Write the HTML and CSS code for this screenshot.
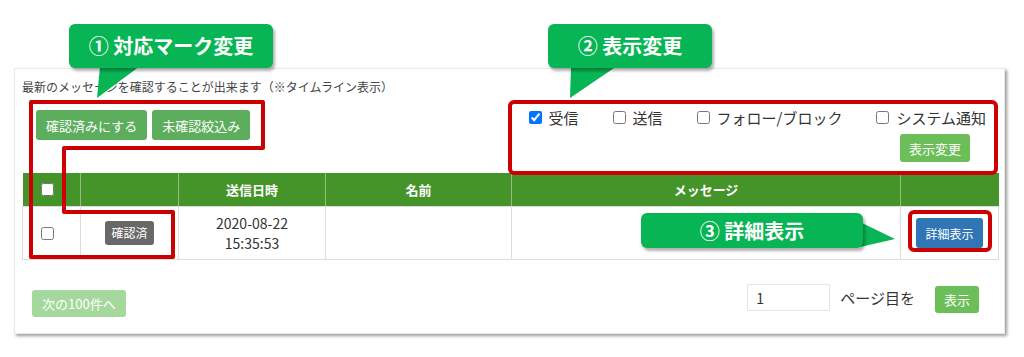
FILE: index.html
```html
<!DOCTYPE html>
<html lang="ja">
<head>
    <meta charset="UTF-8" />
    <title>メッセージ一覧</title>
    <link rel="stylesheet" href="styles.css">
</head>
<body>
    <div class="panel">
        <p class="caption">最新のメッセージを確認することが出来ます（※タイムライン表示）</p>
        <div class="toolbar">
            <div class="actions">
                <button class="btn btn-green">確認済みにする</button>
                <button class="btn btn-green">未確認絞込み</button>
            </div>
            <div class="filters">
                <div class="filter-row">
                    <label><input type="checkbox" checked>受信</label>
                    <label><input type="checkbox">送信</label>
                    <label><input type="checkbox">フォロー/ブロック</label>
                    <label><input type="checkbox">システム通知</label>
                </div>
                <button class="btn btn-light btn-apply">表示変更</button>
            </div>
        </div>
        <table class="messages">
            <colgroup>
                <col style="width: 58px">
                <col style="width: 98px">
                <col style="width: 147px">
                <col style="width: 186px">
                <col style="width: 389px">
                <col style="width: 98px">
            </colgroup>
            <thead>
                <tr>
                    <th class="check-cell"><input type="checkbox"></th>
                    <th></th>
                    <th>送信日時</th>
                    <th>名前</th>
                    <th>メッセージ</th>
                    <th></th>
                </tr>
            </thead>
            <tbody>
                <tr>
                    <td class="check-cell"><input type="checkbox"></td>
                    <td><span class="badge">確認済</span></td>
                    <td class="date">2020-08-22<br>15:35:53</td>
                    <td></td>
                    <td></td>
                    <td><button class="btn btn-blue">詳細表示</button></td>
                </tr>
            </tbody>
        </table>
        <div class="pager">
            <button class="btn btn-pale btn-next">次の100件へ</button>
            <div class="page-jump">
                <input class="page-input" type="text" value="1">
                <span class="page-label">ページ目を</span>
                <button class="btn btn-light btn-show">表示</button>
            </div>
        </div>
    </div>

    <!-- annotation overlay -->
    <svg class="marks" width="1024" height="357" viewBox="0 0 1024 357">
        <polygon class="tail" points="100,66 140,66 97,98" />
        <polygon class="tail" points="571,66 617,66 570,98" />
        <polygon class="tail" points="860,222 895,239 860,247" />
        <path class="frame" d="M31,102 H263 V148 H64 V212 H173 V257 H31 Z" />
        <rect class="frame" x="510" y="102" width="486" height="71" rx="4" />
        <rect class="frame" x="910" y="212" width="80" height="38" rx="4" />
    </svg>
    <div class="callout callout-1">① 対応マーク変更</div>
    <div class="callout callout-2">② 表示変更</div>
    <div class="callout callout-3">③ 詳細表示</div>
</body>
</html>
```

FILE: styles.css
```css
body {
    margin: 0;
    background-color: rgb(255, 255, 255);
    color: rgb(51, 51, 51);
    font-family: "Noto Sans CJK JP", "Noto Sans", sans-serif;
    position: relative;
    width: 1024px;
    height: 357px;
    overflow: hidden;
}
.panel {
    box-sizing: border-box;
    width: 991px;
    height: 266px;
    margin: 68px 0 0 14px;
    padding: 0 6px 0 7px;
    border: 1px solid rgb(234, 234, 234);
    box-shadow: 2px 2px 3px rgba(0, 0, 0, 0.4);
    background: rgb(255, 255, 255);
}
.caption {
    margin: 0;
    padding-top: 9px;
    font-size: 12px;
    line-height: 18px;
    color: rgb(68, 68, 68);
}
.toolbar {
    display: flex;
    justify-content: space-between;
    height: 77px;
}
.actions {
    display: flex;
    gap: 5px;
    padding: 14px 0 0 14px;
    align-items: flex-start;
}
.btn {
    border: none;
    border-radius: 3px;
    color: rgb(255, 255, 255);
    font-family: inherit;
    font-size: 13px;
    cursor: pointer;
    padding: 0 10px;
}
.btn-green {
    background-color: rgb(92, 174, 92);
    height: 30px;
}
.btn-light {
    background-color: rgb(108, 190, 88);
    height: 28px;
}
.btn-blue {
    background-color: rgb(48, 118, 180);
    height: 30px;
    padding: 0 9px;
    font-size: 12px;
}
.btn-pale {
    background-color: rgb(165, 216, 156);
    height: 27px;
}
.filters {
    display: flex;
    flex-direction: column;
    align-items: flex-end;
    padding-top: 12px;
}
.filter-row {
    display: flex;
    gap: 34px;
    margin-right: 12px;
    height: 18px;
    align-items: center;
    font-size: 15px;
}
.filter-row label {
    display: flex;
    align-items: center;
}
input[type="checkbox"] {
    width: 13px;
    height: 13px;
    margin: 0 7px 0 0;
}
.btn-apply {
    margin: 8px 28px 0 0;
    padding: 0 9px;
}
.messages {
    width: 976px;
    border-collapse: collapse;
    table-layout: fixed;
    font-size: 13px;
}
.messages th {
    height: 33px;
    padding: 0;
    background: rgb(69, 148, 41);
    color: rgb(255, 255, 255);
    font-weight: bold;
    border-left: 1px solid rgb(150, 190, 130);
    border-bottom: 1px solid rgb(221, 221, 221);
}
.messages th:first-child {
    border-left: none;
}
.messages td {
    height: 52px;
    padding: 0;
    text-align: center;
    border: 1px solid rgb(221, 221, 221);
}
.messages .check-cell {
    text-align: left;
    padding-left: 18px;
}
.messages .check-cell input {
    display: block;
}
.badge {
    display: inline-block;
    background: rgb(104, 104, 104);
    color: rgb(255, 255, 255);
    border-radius: 3px;
    font-size: 12px;
    line-height: 24px;
    padding: 0 6px;
}
.date {
    font-size: 14px;
    line-height: 20px;
}
.pager {
    display: flex;
    justify-content: space-between;
    margin-top: 24px;
}
.btn-next {
    margin: 6px 0 0 10px;
}
.page-jump {
    display: flex;
    align-items: flex-start;
    margin-right: 19px;
}
.page-input {
    box-sizing: border-box;
    width: 83px;
    height: 27px;
    border: 1px solid rgb(229, 229, 229);
    padding: 0 8px;
    font-family: inherit;
    font-size: 14px;
    color: rgb(51, 51, 51);
}
.page-label {
    margin-left: 10px;
    font-size: 15px;
    line-height: 28px;
}
.btn-show {
    margin: 2px 0 0 20px;
    height: 27px;
    padding: 0 9px;
}
.marks {
    position: absolute;
    top: 0;
    left: 0;
    pointer-events: none;
}
.tail {
    fill: rgb(7, 181, 84);
}
.frame {
    fill: none;
    stroke: rgb(204, 0, 0);
    stroke-width: 4;
    stroke-linejoin: round;
}
.callout {
    position: absolute;
    background: rgb(7, 181, 84);
    color: rgb(255, 255, 255);
    font-size: 20px;
    font-weight: bold;
    text-align: center;
    border-radius: 6px;
    box-shadow: 2px 3px 3px rgba(0, 0, 0, 0.3);
}
.callout-1 {
    left: 69px;
    top: 24px;
    width: 204px;
    height: 44px;
    line-height: 44px;
}
.callout-2 {
    left: 548px;
    top: 24px;
    width: 164px;
    height: 44px;
    line-height: 44px;
}
.callout-3 {
    left: 641px;
    top: 213px;
    width: 222px;
    height: 35px;
    line-height: 35px;
}
```
